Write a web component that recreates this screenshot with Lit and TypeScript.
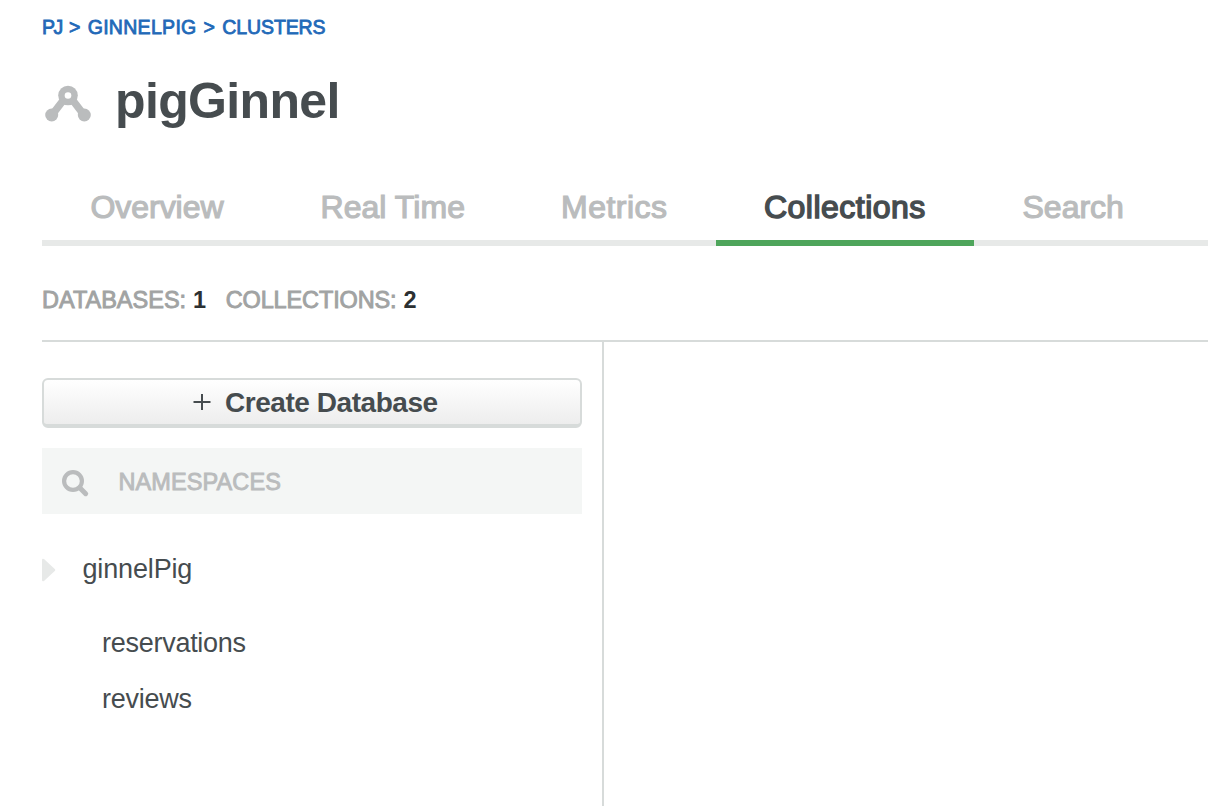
import { LitElement, html, css } from "lit";
import { customElement, state } from "lit/decorators.js";

interface Tab {
  id: string;
  label: string;
}

const TABS: Tab[] = [
  { id: "overview", label: "Overview" },
  { id: "realtime", label: "Real Time" },
  { id: "metrics", label: "Metrics" },
  { id: "collections", label: "Collections" },
  { id: "search", label: "Search" },
];

@customElement("app-root")
export class AppRoot extends LitElement {
  @state() private active = "collections";

  static styles = css`
    :host {
      display: flex;
      flex-direction: column;
      box-sizing: border-box;
      height: 806px;
      padding: 15px 0 0 42px;
      overflow: hidden;
      background: #fff;
      color: #464c4f;
      font-family: "Liberation Sans", Arial, sans-serif;
    }
    .crumbs {
      display: flex;
      height: 24px;
      gap: 7px;
      line-height: 24px;
      font-size: 19.5px;
      letter-spacing: 0.3px;
      color: #2269b8;
      -webkit-text-stroke: 0.8px #2269b8;
      white-space: nowrap;
    }
    .org { letter-spacing: -1.4px; }
    .page { letter-spacing: -0.1px; }
    .title {
      display: flex;
      align-items: center;
      height: 60px;
      margin-top: 32px;
    }
    .logo {
      width: 48px;
      height: 38px;
      margin: 4px 0 0 2px;
    }
    h1 {
      margin: 0 0 0 23px;
      font-size: 50px;
      line-height: 60px;
      font-weight: 700;
      letter-spacing: -0.65px;
    }
    .tabs {
      display: grid;
      grid-template-columns: 230px 240px 204px 258px 1fr;
      height: 59px;
      margin-top: 56px;
    }
    .tab {
      box-sizing: border-box;
      padding-left: 48.5px;
      border-bottom: 6px solid #e7e9e8;
      font-size: 32px;
      line-height: 40px;
      color: #babcbd;
      -webkit-text-stroke: 1.2px #babcbd;
      white-space: nowrap;
      cursor: pointer;
    }
    .overview { letter-spacing: -0.05px; }
    .realtime { letter-spacing: 0.05px; }
    .metrics { padding-left: 49px; letter-spacing: 0.5px; }
    .search { letter-spacing: 0; }
    .collections { padding-left: 48px; letter-spacing: 0.48px; }
    .tab.active {
      border-bottom-color: #4ea55b;
      color: #464c4f;
      -webkit-text-stroke: 1.5px #464c4f;
    }
    .stats {
      display: flex;
      height: 55px;
      padding-top: 39px;
      border-bottom: 2px solid #d7dbda;
      font-size: 23.5px;
      line-height: 30px;
      color: #a1a3a3;
      -webkit-text-stroke: 0.9px #a1a3a3;
      white-space: nowrap;
    }
    .databases { letter-spacing: 0; }
    .total { letter-spacing: -0.13px; }
    .stats b {
      margin: 0 19.5px 0 7px;
      color: #2c3032;
      -webkit-text-stroke: 0;
    }
    .body {
      display: flex;
      flex: 1;
    }
    .side {
      box-sizing: border-box;
      width: 562px;
      padding: 36px 20px 0 0;
      border-right: 2px solid #d7dbda;
    }
    .create {
      box-sizing: border-box;
      display: flex;
      align-items: center;
      width: 540px;
      height: 50px;
      padding: 0 0 0 148.5px;
      border: 2px solid #d7dbda;
      border-bottom-width: 4px;
      border-radius: 6px;
      background: linear-gradient(#fff, #ededed);
      color: #464c4f;
      font: 700 28px/42px "Liberation Sans", Arial, sans-serif;
      letter-spacing: -0.45px;
      white-space: nowrap;
    }
    .create span {
      padding-top: 2px;
    }
    .plus {
      width: 18px;
      height: 18px;
      margin-right: 14.5px;
    }
    .filter {
      display: flex;
      align-items: center;
      height: 66px;
      margin-top: 20px;
      padding-left: 18px;
      background: #f4f6f5;
      font-size: 23.5px;
      line-height: 30px;
      letter-spacing: 0.1px;
      color: #babcbd;
      -webkit-text-stroke: 0.9px #babcbd;
    }
    .filter span {
      padding-top: 2px;
    }
    .lens {
      width: 30px;
      height: 30px;
      margin: 3px 28.5px 0 0;
    }
    .db {
      display: flex;
      align-items: center;
      height: 34px;
      margin-top: 38px;
      font-size: 27px;
      line-height: 34px;
      letter-spacing: -0.15px;
    }
    .arrow {
      width: 14px;
      height: 24px;
      margin: 2px 26.5px 0 0;
    }
    .coll {
      height: 34px;
      margin: 40px 0 0 60px;
      font-size: 27px;
      line-height: 34px;
      letter-spacing: -0.27px;
    }
    .coll + .coll {
      margin-top: 22px;
    }
  `;

  render() {
    return html`
      <nav class="crumbs">
        <span class="org">PJ</span><span>&gt;</span><span>GINNELPIG</span><span>&gt;</span><span class="page">CLUSTERS</span>
      </nav>
      <header class="title">
        <svg class="logo" viewBox="0 0 48 38">
          <g fill="#babcbd" stroke="#babcbd">
            <path d="M8 31L24 10L40 31" fill="none" stroke-width="7.4" />
            <circle cx="7.7" cy="31" r="6.5" stroke="none" />
            <circle cx="40.3" cy="31" r="6.5" stroke="none" />
            <circle cx="24" cy="11.5" r="9.8" stroke="none" />
          </g>
          <circle cx="24" cy="11.5" r="3.3" fill="#fff" />
        </svg>
        <h1>pigGinnel</h1>
      </header>
      <nav class="tabs">
        ${TABS.map(
          (t) => html`<div
            class="tab ${t.id} ${t.id === this.active ? "active" : ""}"
            @click=${() => (this.active = t.id)}
          >${t.label}</div>`
        )}
      </nav>
      <div class="stats">
        <span class="databases">DATABASES:</span><b>1</b><span class="total">COLLECTIONS:</span><b>2</b>
      </div>
      <div class="body">
        <aside class="side">
          <button class="create">
            <svg class="plus" viewBox="0 0 18 18">
              <path d="M0.5 9H17.5M9 1V17" stroke="#464c4f" stroke-width="2" />
            </svg>
            <span>Create Database</span>
          </button>
          <div class="filter">
            <svg class="lens" viewBox="0 0 30 30">
              <circle cx="13" cy="13" r="8.9" fill="none" stroke="#babcbd" stroke-width="4.2" />
              <path d="M20 20L25.7 25.7" stroke="#babcbd" stroke-width="5" stroke-linecap="round" />
            </svg>
            <span>NAMESPACES</span>
          </div>
          <div class="db">
            <svg class="arrow" viewBox="0 0 14 24">
              <path d="M0 2Q0 0 2 1L13 11.2Q13.6 12 13 12.8L2 23Q0 24 0 22Z" fill="#e7e9e8" />
            </svg>
            <span>ginnelPig</span>
          </div>
          <div class="coll">reservations</div>
          <div class="coll">reviews</div>
        </aside>
      </div>
    `;
  }
}
